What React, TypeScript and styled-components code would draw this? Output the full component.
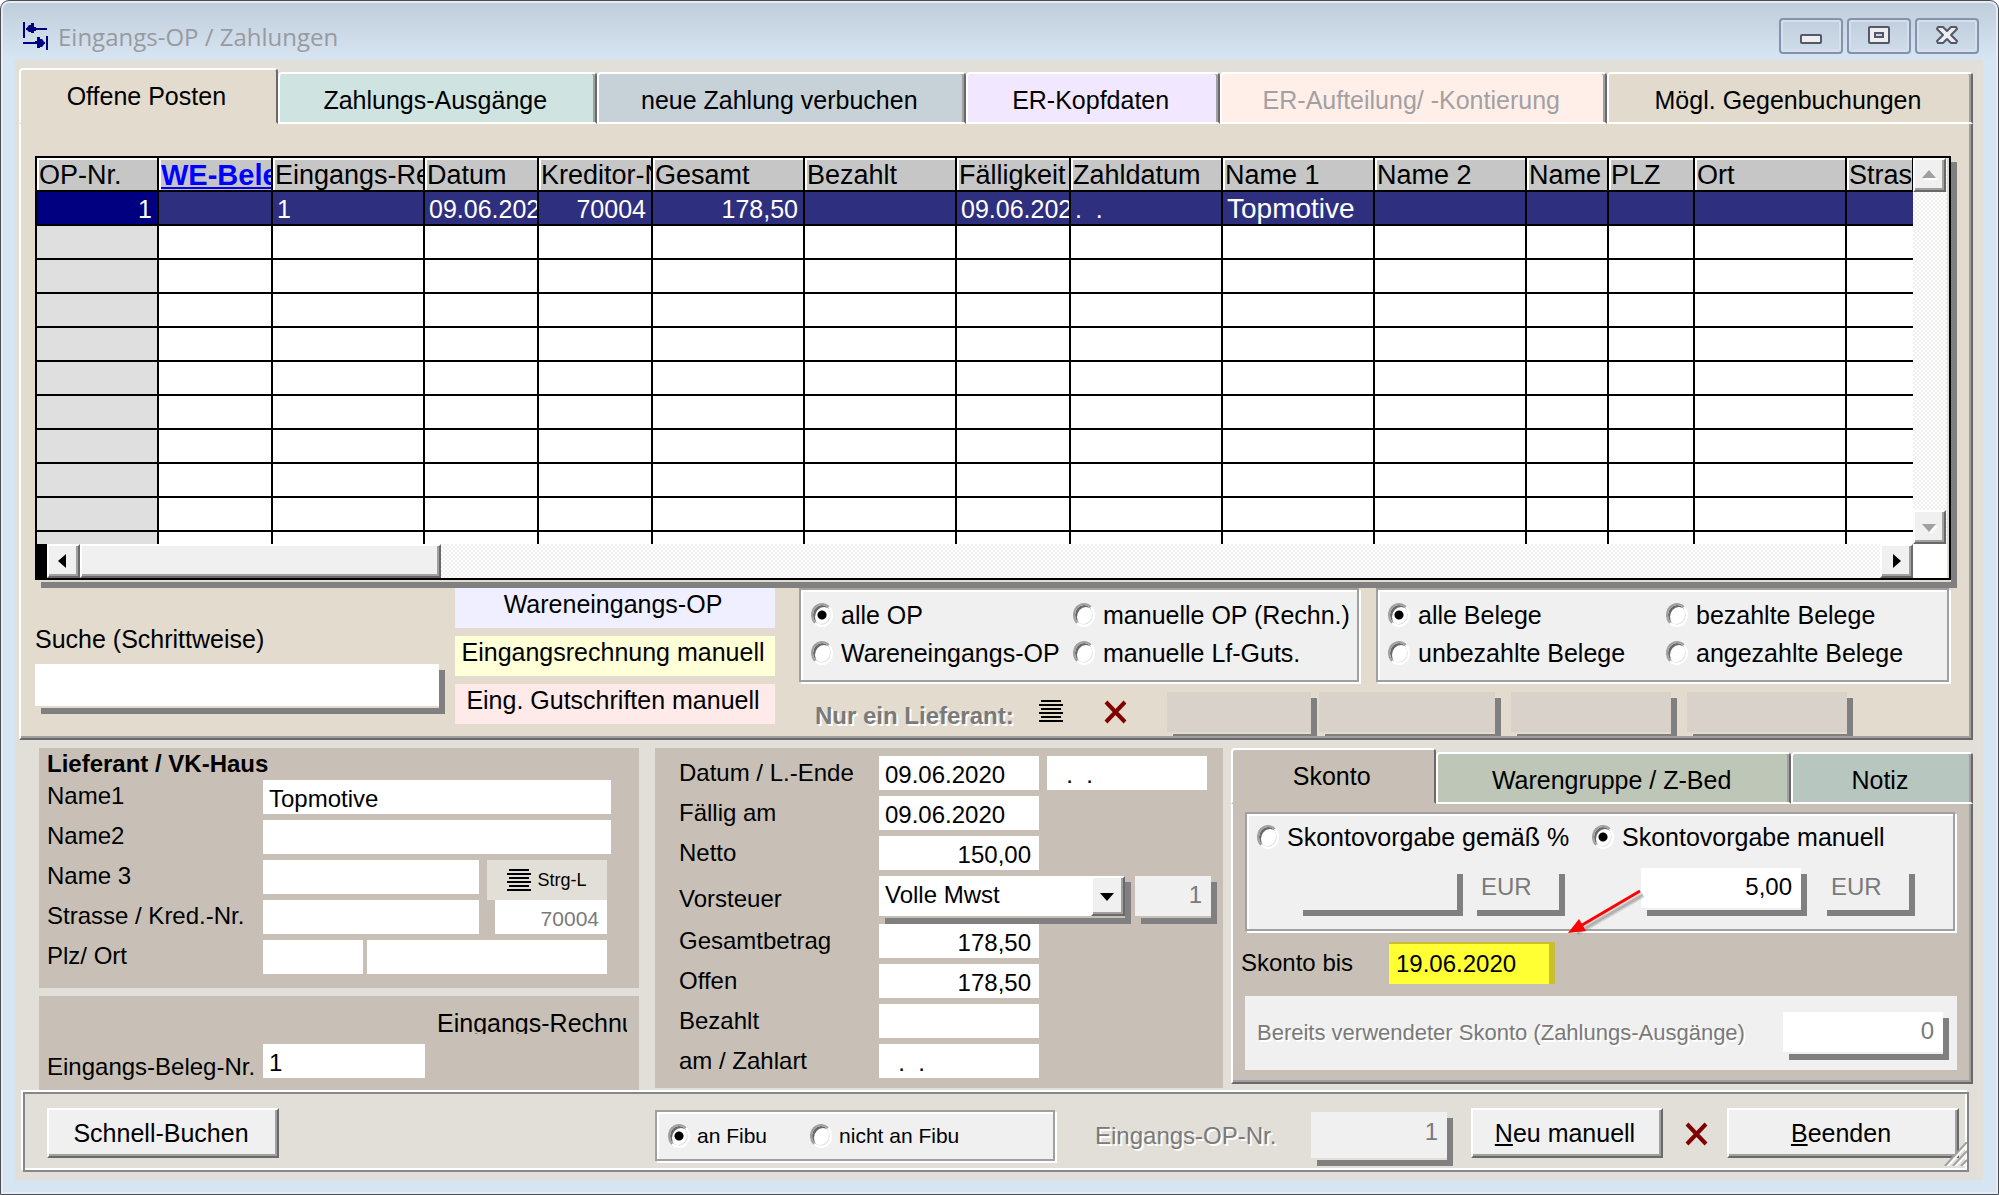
import React from "react";
import styled, { createGlobalStyle, css } from "styled-components";

const SANS = '"Liberation Sans", Arial, sans-serif';
const C = {
  face: "#e2dfd8",
  page: "#e3dbce",
  taupe: "#c8c0b6",
  control: "#f0f0f0",
  light: "#ffffff",
  mid: "#a0a0a0",
  dark: "#696969",
  shadow: "#808080",
  muted: "#7a7a7a",
};

const GlobalStyle = createGlobalStyle`
  *, *::before, *::after { box-sizing: border-box; }
  body { margin: 0; background: #fff; }
  button, input, select { font: inherit; color: inherit; margin: 0; border-radius: 0; }
`;

/* ---------- window ---------- */

const Window = styled.div`
  display: flex;
  flex-direction: column;
  min-height: 100vh;
  border: 1px solid #4b4f55;
  border-radius: 9px 9px 0 0;
  background: linear-gradient(#bfccda, #d7e4f2 58px);
  box-shadow: inset 0 0 0 2px #e6ecf4;
  padding: 0 15px 14px 14px;
  font: 24px/28px ${SANS};
  color: #000;
`;

const TitleBar = styled.header`
  display: flex;
  align-items: center;
  height: 59px;
  padding: 10px 4px 0 8px;
`;

const Title = styled.h1`
  flex: 1;
  margin: 2px 0 0 10px;
  font: 400 24px/32px "Open Sans", "Noto Sans", sans-serif;
  color: #999a9f;
`;

const CaptionButtons = styled.div`
  display: flex;
  gap: 4px;
  align-self: flex-start;
  padding-top: 7px;
`;

const CaptionButton = styled.button`
  display: grid;
  place-items: center;
  width: 64px;
  height: 36px;
  padding: 0;
  border: 2px solid #8492ad;
  border-radius: 4px;
  background: linear-gradient(#c1cedd, #cfdcea);
  box-shadow: inset 0 0 0 2px #d5e0ec;
`;

const Body = styled.main`
  flex: 1;
  background: ${C.face};
  padding: 8px 10px 8px 4px;
`;

/* ---------- tabs ---------- */

const TabStrip = styled.div`
  display: flex;
  align-items: flex-end;
`;

const Tab = styled.button<{ $basis: number; $bg: string; $active?: boolean }>`
  flex: ${(p) => p.$basis} 1 0;
  min-width: 0;
  height: 52px;
  padding: 4px 4px 0 0;
  border: 2px solid ${C.light};
  border-right-color: ${C.dark};
  border-radius: 4px 4px 0 0;
  background: ${(p) => p.$bg};
  box-shadow: inset -2px 0 0 ${C.mid};
  font-size: 25px;
  white-space: nowrap;
  &:disabled { color: #a3a0a3; }
  ${(p) =>
    p.$active &&
    css`
      height: 56px;
      padding: 0 4px 0 0;
      border-bottom-color: ${p.$bg};
      box-shadow: none;
    `}
`;

const TabPage = styled.section<{ $bg: string }>`
  background: ${(p) => p.$bg};
  border: solid ${C.dark};
  border-width: 0 2px 2px 0;
  border-left: 2px solid ${C.light};
  box-shadow: inset -2px -2px 0 ${C.mid};
`;

const MainPage = styled(TabPage)`
  padding: 32px 20px 2px 14px;
`;

/* ---------- data grid ---------- */

const Drop = styled.div<{ $bg: string }>`
  display: flex;
  flex: none;
  padding-bottom: 2px;
  background: ${(p) => p.$bg};
  box-shadow: 6px 6px 0 ${C.shadow};
`;

const GridFrame = styled.div`
  display: grid;
  grid-template-columns: minmax(0, 1fr) 34px;
  grid-template-rows: 386px 34px;
  width: 100%;
  padding-right: 2px;
  border: 2px solid #000;
  background: ${C.page};
`;

const GridView = styled.div`
  overflow: hidden;
  background: #fff;
`;

const Table = styled.table`
  width: 100%;
  table-layout: fixed;
  border-collapse: separate;
  border-spacing: 0;
`;

const HeadCell = styled.th<{ $key?: boolean }>`
  height: 34px;
  padding: 2px 0 0 2px;
  border-right: 2px solid #000;
  border-bottom: 2px solid #000;
  background: #c6c6c6;
  box-shadow: inset 2px 2px 0 #fff;
  overflow: hidden;
  white-space: nowrap;
  text-align: left;
  font-size: 27px;
  line-height: 30px;
  font-weight: 400;
  ${(p) =>
    p.$key &&
    css`
      font-size: 29px;
      font-weight: 700;
      color: #0000ff;
      text-decoration: underline;
    `}
  &:last-child { border-right-width: 1px; }
`;

const Cell = styled.td<{ $right?: boolean; $big?: boolean }>`
  height: 34px;
  padding: 1px 5px 0 4px;
  border-right: 2px solid #000;
  border-bottom: 2px solid #000;
  overflow: hidden;
  white-space: pre;
  font-size: ${(p) => (p.$big ? 28 : 25)}px;
  line-height: 30px;
  text-align: ${(p) => (p.$right ? "right" : "left")};
  &:first-child { background: #dfdfdf; }
  &:last-child { border-right: 0; }
`;

const Row = styled.tr<{ $selected?: boolean }>`
  ${(p) =>
    p.$selected &&
    css`
      background: #2f2f80;
      color: #fff;
      ${Cell}:first-child { background: #000080; }
    `}
`;

const track = css`
  background: repeating-conic-gradient(#fff 0 25%, #f0f0f0 0 50%) 0 0 / 4px 4px;
`;

const VScroll = styled.div`
  ${track}
  display: flex;
  flex-direction: column;
  justify-content: space-between;
`;

const HScroll = styled.div`
  ${track}
  display: flex;
  border-left: 10px solid #000;
`;

const raised = css`
  border: 2px solid ${C.light};
  border-right-color: ${C.dark};
  border-bottom-color: ${C.dark};
  background: ${C.control};
  box-shadow: inset -2px -2px 0 ${C.mid};
`;

const ScrollButton = styled.button`
  ${raised}
  display: grid;
  place-items: center;
  flex: none;
  width: 33px;
  height: 34px;
  padding: 0;
`;

const Thumb = styled.div`
  ${raised}
  width: 361px;
  margin-right: auto;
`;

/* ---------- filter strip ---------- */

const Filters = styled.div`
  display: flex;
  height: 148px;
  margin-top: 6px;
  overflow: hidden;
`;

const SearchBox = styled.div`
  width: 420px;
  padding-top: 37px;
`;

const SearchLabel = styled.label`
  display: block;
  margin-bottom: 11px;
  font-size: 25px;
`;

const SearchField = styled.div`
  width: 404px;
`;

const Legends = styled.div`
  display: flex;
  flex-direction: column;
  gap: 8px;
  width: 320px;
`;

const Legend = styled.div<{ $bg: string }>`
  height: 40px;
  padding: 2px 4px 0 0;
  background: ${(p) => p.$bg};
  font-size: 25px;
  text-align: center;
  white-space: nowrap;
`;

const FilterColumn = styled.div`
  flex: 1;
  margin-left: 24px;
  padding-right: 2px;
`;

const GroupRow = styled.div`
  display: flex;
  gap: 17px;
`;

const Groove = styled.div`
  border: 2px solid ${C.mid};
  background: ${C.control};
  box-shadow: 2px 2px 0 #fff, inset 2px 2px 0 #fff;
`;

const RadioGrid = styled(Groove)<{ $first: number; $width?: number }>`
  display: grid;
  grid-template-columns: ${(p) => p.$first}px 1fr;
  grid-auto-rows: 38px;
  flex: ${(p) => (p.$width ? `0 0 ${p.$width}px` : "1")};
  height: 94px;
  padding: 6px 0 0 10px;
`;

const RadioLabel = styled.label<{ $small?: boolean }>`
  display: flex;
  align-items: center;
  gap: ${(p) => (p.$small ? 7 : 8)}px;
  font-size: ${(p) => (p.$small ? 21 : 25)}px;
  white-space: nowrap;
`;

const RadioInput = styled.input`
  appearance: none;
  flex: none;
  width: 22px;
  height: 24px;
  border: 2px solid ${C.mid};
  border-right-color: #fff;
  border-bottom-color: #fff;
  background: #fff;
  box-shadow: inset 2px 2px 0 ${C.dark}, inset -1px -1px 0 #e3e3e3;
  && { border-radius: 50%; }
  &:checked {
    background: radial-gradient(circle at center, #000 4px, #fff 5px);
  }
`;

const SupplierRow = styled.div`
  display: flex;
  align-items: flex-start;
  margin-top: 10px;
  padding-left: 16px;
`;

const SupplierLabel = styled.span`
  width: 224px;
  margin-top: 10px;
  font-weight: 700;
  color: ${C.muted};
  text-shadow: 2px 2px 0 #fff;
`;

const IconButton = styled.button<{ $gap: number }>`
  display: block;
  flex: none;
  margin: 8px ${(p) => p.$gap}px 0 0;
  padding: 0;
  border: 0;
  background: none;
  line-height: 0;
`;

/* ---------- fields ---------- */

const TextField = styled.input<{ $w?: number; $right?: boolean; $small?: boolean; $dim?: boolean }>`
  display: block;
  flex: none;
  width: ${(p) => (p.$w ? `${p.$w}px` : "100%")};
  height: 34px;
  padding: 3px 8px 0 6px;
  border: 0;
  background: #fff;
  color: ${(p) => (p.$dim ? C.muted : "#000")};
  font-size: ${(p) => (p.$small ? 21 : 24)}px;
  text-align: ${(p) => (p.$right ? "right" : "left")};
`;

const TallField = styled(TextField)<{ $bg?: string; $h?: number }>`
  height: ${(p) => p.$h ?? 40}px;
  padding: 0 9px 3px 10px;
  background: ${(p) => p.$bg ?? "#fff"};
`;

const DueField = styled(TallField)`
  height: 42px;
  padding: 0 2px 0 7px;
  border: solid #c8c030;
  border-width: 2px 6px 0 0;
  background: #ffff33;
`;

/* ---------- lower panels ---------- */

const Lower = styled.div`
  display: flex;
  align-items: flex-start;
  margin-top: 8px;
  padding-left: 20px;
`;

const LeftColumn = styled.div`
  display: flex;
  flex: 0 0 600px;
  flex-direction: column;
  gap: 8px;
  margin-right: 16px;
`;

const Panel = styled.section`
  background: ${C.taupe};
`;

const AddressPanel = styled(Panel)`
  padding: 2px 0 14px 8px;
`;

const PanelTitle = styled.h2`
  margin: 0 0 2px;
  font: 700 24px/28px ${SANS};
`;

const Rows = styled.div`
  display: flex;
  flex-direction: column;
  gap: 6px;
`;

const FieldRow = styled.div<{ $center?: boolean }>`
  display: flex;
  align-items: ${(p) => (p.$center ? "center" : "flex-start")};
  min-height: 34px;
`;

const FieldLabel = styled.label<{ $w: number }>`
  flex: none;
  width: ${(p) => p.$w}px;
  line-height: 32px;
  white-space: nowrap;
`;

const Space = styled.span<{ $w: number }>`
  flex: none;
  width: ${(p) => p.$w}px;
`;

const LookupButton = styled.button`
  display: flex;
  align-items: center;
  justify-content: center;
  gap: 6px;
  width: 120px;
  height: 40px;
  margin: 0 0 -6px 8px;
  padding: 0;
  border: 0;
  background: ${C.face};
  font-size: 18px;
`;

const DocPanel = styled(Panel)`
  padding: 13px 12px 12px 8px;
`;

const ClippedCaption = styled.div`
  width: 190px;
  height: 25px;
  margin: 0 0 10px auto;
  overflow: hidden;
  font-size: 25px;
  white-space: nowrap;
`;

const DocRow = styled.div`
  display: flex;
  align-items: flex-start;
`;

const DocLabel = styled.label`
  width: 216px;
  height: 34px;
  padding-top: 9px;
  white-space: nowrap;
`;

const AmountPanel = styled(Panel)`
  flex: 0 0 568px;
  margin-right: 8px;
  padding: 8px 0 10px 24px;
`;

const VatRow = styled(FieldRow)`
  height: 42px;
`;

const VatLabel = styled(FieldLabel)`
  padding-top: 7px;
`;

const Combo = styled.div`
  position: relative;
  width: 246px;
  height: 40px;
  background: #fff;
`;

const Select = styled.select`
  appearance: none;
  width: 100%;
  height: 40px;
  padding: 0 40px 2px 6px;
  border: 0;
  background: #fff;
`;

const ComboArrow = styled.span`
  ${raised}
  position: absolute;
  top: 0;
  right: 0;
  display: grid;
  place-items: center;
  width: 34px;
  height: 40px;
  pointer-events: none;
`;

const DiscountColumn = styled.div`
  flex: 1;
  min-width: 0;
`;

const DiscountPage = styled(TabPage)`
  padding: 8px 14px 12px 12px;
`;

const DiscountGroup = styled(Groove)`
  position: relative;
  height: 119px;
  margin-right: 2px;
  padding: 8px 0 0 10px;
`;

const DiscountRadios = styled.div`
  display: grid;
  grid-template-columns: 335px 1fr;
  height: 30px;
`;

const DiscountFields = styled.div`
  display: flex;
  align-items: flex-start;
  margin-top: 16px;
  padding-left: 40px;
`;

const Arrow = styled.svg`
  position: absolute;
  left: 314px;
  top: 70px;
  overflow: visible;
  pointer-events: none;
`;

const DueRow = styled.div`
  display: flex;
  align-items: center;
  margin: 11px 0 12px -4px;
`;

const DueLabel = styled.label`
  width: 148px;
`;

const UsedBox = styled.div`
  display: flex;
  align-items: center;
  justify-content: space-between;
  height: 74px;
  padding: 0 14px 0 12px;
  background: ${C.control};
  font-size: 22px;
`;

const DimLabel = styled.label`
  color: ${C.muted};
  text-shadow: 2px 2px 0 #fff;
  white-space: nowrap;
`;

/* ---------- footer ---------- */

const Footer = styled.footer`
  position: relative;
  display: flex;
  align-items: flex-start;
  height: 80px;
  margin: 2px 4px 0;
  padding: 14px 8px 0 22px;
  border: 2px solid #85878a;
  box-shadow: -2px -2px 0 #fff, inset -2px -2px 0 #fff;
`;

const PushButton = styled.button<{ $w: number }>`
  ${raised}
  width: ${(p) => p.$w}px;
  height: 50px;
  padding: 0 4px 0 0;
  font-size: 25px;
`;

const PostingGroup = styled(Groove)`
  display: flex;
  align-items: center;
  gap: 43px;
  width: 400px;
  height: 51px;
  margin: 2px 40px 0 376px;
  padding-left: 11px;
`;

const FooterLabel = styled(DimLabel)`
  width: 216px;
  padding-top: 14px;
`;

const FooterRight = styled.div`
  display: flex;
  align-items: flex-start;
  margin-left: auto;
`;

const FooterDrop = styled(Drop)`
  margin-top: 4px;
`;

const FooterField = styled(TallField)`
  padding-bottom: 7px;
`;

const FooterIcon = styled(IconButton)`
  margin-top: 14px;
`;

const Grip = styled.svg`
  position: absolute;
  right: 0;
  bottom: 4px;
`;

/* ---------- drawings ---------- */

const AppIcon = () => (
  <svg width="25" height="28" viewBox="0 0 25 28" fill="none" stroke="#000080" strokeWidth="2" aria-hidden="true">
    <path d="M1 0v16M24 14v14M3 7h21M0 21h22" />
    <path d="M3 7l3-4h2V1h3v4h2v4h-2v2H8v-1H6zM22 21l-3-4h-2v-2h-3v4h-2v3h2v4h3v-1h2z" fill="#000080" stroke="none" />
  </svg>
);

const ListIcon = () => (
  <svg width="24" height="23" viewBox="0 0 24 23" stroke="#000" strokeWidth="2" aria-hidden="true">
    <path d="M2 1h20M0 5h24M2 9h20M0 13h24M2 17h20M0 21h24" />
  </svg>
);

const CrossIcon = () => (
  <svg width="24" height="24" viewBox="0 0 24 24" stroke="#800000" strokeWidth="4" fill="none" aria-hidden="true">
    <path d="M2 2l19 20M21 2L2 22" />
  </svg>
);

const Tri = ({ d, dim }: { d: string; dim?: boolean }) => (
  <svg width="18" height="18" viewBox="0 0 18 18" aria-hidden="true">
    {dim && <path d={d} fill="#fff" transform="translate(2 2)" />}
    <path d={d} fill={dim ? "#a0a0a0" : "#000"} />
  </svg>
);

const UP = "M8 4l7 8H1z";
const DOWN = "M1 6h14l-7 8z";
const LEFT = "M11 2v14L3 9z";
const RIGHT = "M5 2v14l8-7z";

/* ---------- data ---------- */

const columns: [string, number | undefined][] = [
  ["OP-Nr.", 122], ["WE-Beleg", 114], ["Eingangs-Rechnung", 152], ["Datum", 114],
  ["Kreditor-Nr.", 114], ["Gesamt", 152], ["Bezahlt", 152], ["Fälligkeit", 114],
  ["Zahldatum", 152], ["Name 1", 152], ["Name 2", 152], ["Name 3", 82],
  ["PLZ", 86], ["Ort", 152], ["Stras", undefined],
];
const record = ["1", "", "1", "09.06.2020", "70004", "178,50", "", "09.06.2020", ".  .", "Topmotive", "", "", "", "", ""];
const rightAligned = new Set([0, 4, 5]);

const tabs = [
  { label: "Offene Posten", w: 257, bg: C.page },
  { label: "Zahlungs-Ausgänge", w: 319, bg: "#cfe3e1" },
  { label: "neue Zahlung verbuchen", w: 370, bg: "#c6d1d8" },
  { label: "ER-Kopfdaten", w: 252, bg: "#f1e8ff" },
  { label: "ER-Aufteilung/ -Kontierung", w: 389, bg: "#ffefe8", disabled: true },
  { label: "Mögl. Gegenbuchungen", w: 367, bg: "#e2dbcd" },
];

const discountTabs = [
  { label: "Skonto", w: 204, bg: C.taupe },
  { label: "Warengruppe / Z-Bed", w: 358, bg: "#bec6b7" },
  { label: "Notiz", w: 180, bg: "#b7c7c0" },
];

const amounts = [
  { id: "gesamt", label: "Gesamtbetrag", value: "178,50", right: true },
  { id: "offen", label: "Offen", value: "178,50", right: true },
  { id: "bezahlt", label: "Bezahlt", value: "", right: true },
  { id: "zahlart", label: "am / Zahlart", value: "  .  .", right: false },
];

const Radio = ({ name, label, on, small }: { name: string; label: string; on?: boolean; small?: boolean }) => (
  <RadioLabel $small={small}>
    <RadioInput type="radio" name={name} defaultChecked={on} />
    {label}
  </RadioLabel>
);

const Tabs = ({ items, name }: { items: { label: string; w: number; bg: string; disabled?: boolean }[]; name: string }) => (
  <TabStrip role="tablist" aria-label={name}>
    {items.map((t, i) => (
      <Tab key={t.label} role="tab" type="button" aria-selected={i === 0} $basis={t.w} $bg={t.bg} $active={i === 0} disabled={t.disabled}>
        {t.label}
      </Tab>
    ))}
  </TabStrip>
);

const DataGrid = () => (
  <Drop $bg={C.page}>
    <GridFrame>
      <GridView>
        <Table>
          <colgroup>
            {columns.map(([c, w]) => <col key={c} style={{ width: w }} />)}
          </colgroup>
          <thead>
            <tr>
              {columns.map(([c], i) => <HeadCell key={c} $key={i === 1}>{c}</HeadCell>)}
            </tr>
          </thead>
          <tbody>
            <Row $selected>
              {record.map((v, i) => (
                <Cell key={i} $right={rightAligned.has(i)} $big={i === 9}>{v}</Cell>
              ))}
            </Row>
            {Array.from({ length: 10 }, (_, r) => (
              <Row key={r}>
                {columns.map(([c]) => <Cell key={c} />)}
              </Row>
            ))}
          </tbody>
        </Table>
      </GridView>
      <VScroll>
        <ScrollButton type="button" aria-label="Nach oben"><Tri d={UP} dim /></ScrollButton>
        <ScrollButton type="button" aria-label="Nach unten"><Tri d={DOWN} dim /></ScrollButton>
      </VScroll>
      <HScroll>
        <ScrollButton type="button" aria-label="Nach links"><Tri d={LEFT} /></ScrollButton>
        <Thumb />
        <ScrollButton type="button" aria-label="Nach rechts"><Tri d={RIGHT} /></ScrollButton>
      </HScroll>
      <GridView />
    </GridFrame>
  </Drop>
);

const FilterStrip = () => (
  <Filters>
    <SearchBox>
      <SearchLabel htmlFor="suche">Suche (Schrittweise)</SearchLabel>
      <SearchField>
        <Drop $bg={C.page}><TallField id="suche" $h={42} /></Drop>
      </SearchField>
    </SearchBox>
    <Legends>
      <Legend $bg="#efefff">Wareneingangs-OP</Legend>
      <Legend $bg="#ffffd8">Eingangsrechnung manuell</Legend>
      <Legend $bg="#ffeaea">Eing. Gutschriften manuell</Legend>
    </Legends>
    <FilterColumn>
      <GroupRow>
        <RadioGrid role="radiogroup" aria-label="OP-Art" $first={262} $width={560}>
          <Radio name="op" label="alle OP" on />
          <Radio name="op" label="manuelle OP (Rechn.)" />
          <Radio name="op" label="Wareneingangs-OP" />
          <Radio name="op" label="manuelle Lf-Guts." />
        </RadioGrid>
        <RadioGrid role="radiogroup" aria-label="Belege" $first={278}>
          <Radio name="beleg" label="alle Belege" on />
          <Radio name="beleg" label="bezahlte Belege" />
          <Radio name="beleg" label="unbezahlte Belege" />
          <Radio name="beleg" label="angezahlte Belege" />
        </RadioGrid>
      </GroupRow>
      <SupplierRow>
        <SupplierLabel>Nur ein Lieferant:</SupplierLabel>
        <IconButton type="button" aria-label="Lieferant wählen" $gap={41}><ListIcon /></IconButton>
        <IconButton type="button" aria-label="Lieferant löschen" $gap={39}><CrossIcon /></IconButton>
        <Drop $bg={C.page}><TallField $w={144} $bg="#d8d2ca" disabled aria-label="Lieferant Nr." /></Drop>
        <Space $w={8} />
        <Drop $bg={C.page}><TallField $w={176} $bg="#d8d2ca" disabled aria-label="Lieferant Name" /></Drop>
        <Space $w={16} />
        <Drop $bg={C.page}><TallField $w={160} $bg="#d8d2ca" disabled aria-label="Lieferant Strasse" /></Drop>
        <Space $w={16} />
        <Drop $bg={C.page}><TallField $w={160} $bg="#d8d2ca" disabled aria-label="Lieferant Ort" /></Drop>
      </SupplierRow>
    </FilterColumn>
  </Filters>
);

const Address = () => (
  <AddressPanel>
    <PanelTitle>Lieferant / VK-Haus</PanelTitle>
    <Rows>
      <FieldRow>
        <FieldLabel $w={216} htmlFor="name1">Name1</FieldLabel>
        <TextField id="name1" $w={348} defaultValue="Topmotive" />
      </FieldRow>
      <FieldRow>
        <FieldLabel $w={216} htmlFor="name2">Name2</FieldLabel>
        <TextField id="name2" $w={348} />
      </FieldRow>
      <FieldRow>
        <FieldLabel $w={216} htmlFor="name3">Name 3</FieldLabel>
        <TextField id="name3" $w={216} />
        <LookupButton type="button"><ListIcon />Strg-L</LookupButton>
      </FieldRow>
      <FieldRow>
        <FieldLabel $w={216} htmlFor="strasse">Strasse / Kred.-Nr.</FieldLabel>
        <TextField id="strasse" $w={216} />
        <Space $w={16} />
        <TextField $w={112} $right $small $dim disabled aria-label="Kreditor-Nr." defaultValue="70004" />
      </FieldRow>
      <FieldRow>
        <FieldLabel $w={216} htmlFor="plz">Plz/ Ort</FieldLabel>
        <TextField id="plz" $w={100} />
        <Space $w={4} />
        <TextField $w={240} aria-label="Ort" />
      </FieldRow>
    </Rows>
  </AddressPanel>
);

const Amounts = () => (
  <AmountPanel>
    <Rows>
      <FieldRow $center>
        <FieldLabel $w={200} htmlFor="datum">Datum / L.-Ende</FieldLabel>
        <TextField id="datum" $w={160} defaultValue="09.06.2020" />
        <Space $w={8} />
        <TextField $w={160} aria-label="Leistungsende" defaultValue="  .  ." />
      </FieldRow>
      <FieldRow $center>
        <FieldLabel $w={200} htmlFor="faellig">Fällig am</FieldLabel>
        <TextField id="faellig" $w={160} defaultValue="09.06.2020" />
      </FieldRow>
      <FieldRow $center>
        <FieldLabel $w={200} htmlFor="netto">Netto</FieldLabel>
        <TextField id="netto" $w={160} $right defaultValue="150,00" />
      </FieldRow>
      <VatRow>
        <VatLabel $w={200} htmlFor="vorsteuer">Vorsteuer</VatLabel>
        <Drop $bg={C.taupe}>
          <Combo>
            <Select id="vorsteuer" defaultValue="Volle Mwst"><option>Volle Mwst</option></Select>
            <ComboArrow><Tri d={DOWN} /></ComboArrow>
          </Combo>
        </Drop>
        <Space $w={10} />
        <Drop $bg={C.taupe}><TallField $w={76} $bg={C.control} $dim $right disabled aria-label="Steuerschlüssel" defaultValue="1" /></Drop>
      </VatRow>
      {amounts.map((a) => (
        <FieldRow $center key={a.id}>
          <FieldLabel $w={200} htmlFor={a.id}>{a.label}</FieldLabel>
          <TextField id={a.id} $w={160} $right={a.right} defaultValue={a.value} />
        </FieldRow>
      ))}
    </Rows>
  </AmountPanel>
);

const Discount = () => (
  <DiscountColumn>
    <Tabs items={discountTabs} name="Konditionen" />
    <DiscountPage $bg={C.taupe}>
      <DiscountGroup role="radiogroup" aria-label="Skontovorgabe">
        <DiscountRadios>
          <Radio name="skonto" label="Skontovorgabe gemäß %" />
          <Radio name="skonto" label="Skontovorgabe manuell" on />
        </DiscountRadios>
        <DiscountFields>
          <Drop $bg={C.control}><TallField $w={160} $bg={C.control} disabled aria-label="Skonto nach Prozent" /></Drop>
          <Space $w={14} />
          <Drop $bg={C.control}><TallField $w={88} $bg={C.control} $dim disabled aria-label="Währung Prozent" defaultValue="EUR" /></Drop>
          <Space $w={82} />
          <Drop $bg={C.control}><TallField $w={160} $right aria-label="Skonto manuell" defaultValue="5,00" /></Drop>
          <Space $w={20} />
          <Drop $bg={C.control}><TallField $w={88} $bg={C.control} $dim disabled aria-label="Währung manuell" defaultValue="EUR" /></Drop>
        </DiscountFields>
        <Arrow width="82" height="50" viewBox="0 0 82 50" aria-hidden="true">
          <path d="M82 11L16 49" stroke="#707070" strokeOpacity="0.2" strokeWidth="6" />
          <path d="M82 11L16 49" stroke="#707070" strokeOpacity="0.35" strokeWidth="3" />
          <path d="M79 7L16 44" stroke="#f00" strokeWidth="3" />
          <path d="M7 49l11-14 7 12z" fill="#f00" />
        </Arrow>
      </DiscountGroup>
      <DueRow>
        <DueLabel htmlFor="skontobis">Skonto bis</DueLabel>
        <DueField id="skontobis" $w={166} defaultValue="19.06.2020" />
      </DueRow>
      <UsedBox>
        <DimLabel htmlFor="verwendet">Bereits verwendeter Skonto (Zahlungs-Ausgänge)</DimLabel>
        <Drop $bg={C.control}><TallField id="verwendet" $w={160} $right $dim disabled defaultValue="0" /></Drop>
      </UsedBox>
    </DiscountPage>
  </DiscountColumn>
);

export default function App() {
  return (
    <>
      <GlobalStyle />
      <Window>
        <TitleBar>
          <AppIcon />
          <Title>Eingangs-OP / Zahlungen</Title>
          <CaptionButtons>
            <CaptionButton type="button" aria-label="Minimieren">
              <svg width="24" height="20" viewBox="0 0 24 20"><rect x="2" y="9" width="20" height="8" rx="1" fill="#eee" stroke="#53576a" strokeWidth="2" /></svg>
            </CaptionButton>
            <CaptionButton type="button" aria-label="Maximieren">
              <svg width="24" height="20" viewBox="0 0 24 20"><rect x="2" y="1" width="20" height="16" rx="1" fill="#eee" stroke="#53576a" strokeWidth="2" /><rect x="8" y="7" width="8" height="4" fill="#c8d4e2" stroke="#53576a" strokeWidth="2" /></svg>
            </CaptionButton>
            <CaptionButton type="button" aria-label="Schließen">
              <svg width="24" height="20" viewBox="0 0 24 20"><path d="M3 1h5l4 4 4-4h5l1 2-6 6 6 6-1 2h-5l-4-4-4 4H3l-1-2 6-6-6-6z" fill="#eee" stroke="#53576a" strokeWidth="2" strokeLinejoin="round" /></svg>
            </CaptionButton>
          </CaptionButtons>
        </TitleBar>
        <Body>
          <Tabs items={tabs} name="Bereiche" />
          <MainPage $bg={C.page}>
            <DataGrid />
            <FilterStrip />
          </MainPage>
          <Lower>
            <LeftColumn>
              <Address />
              <DocPanel>
                <ClippedCaption>Eingangs-Rechnung</ClippedCaption>
                <DocRow>
                  <DocLabel htmlFor="beleg-nr">Eingangs-Beleg-Nr.</DocLabel>
                  <TextField id="beleg-nr" $w={162} defaultValue="1" />
                </DocRow>
              </DocPanel>
            </LeftColumn>
            <Amounts />
            <Discount />
          </Lower>
          <Footer>
            <PushButton type="button" $w={232}>Schnell-Buchen</PushButton>
            <PostingGroup role="radiogroup" aria-label="Fibu">
              <Radio name="fibu" label="an Fibu" on small />
              <Radio name="fibu" label="nicht an Fibu" small />
            </PostingGroup>
            <FooterRight>
              <FooterLabel htmlFor="op-nr">Eingangs-OP-Nr.</FooterLabel>
              <FooterDrop $bg={C.face}><FooterField id="op-nr" $w={136} $h={46} $bg={C.control} $dim $right disabled defaultValue="1" /></FooterDrop>
              <Space $w={24} />
              <PushButton type="button" $w={192}><u>N</u>eu manuell</PushButton>
              <Space $w={22} />
              <FooterIcon type="button" aria-label="Löschen" $gap={18}><CrossIcon /></FooterIcon>
              <PushButton type="button" $w={232}><u>B</u>eenden</PushButton>
            </FooterRight>
            <Grip width="24" height="24" viewBox="0 0 24 24" aria-hidden="true">
              <path d="M4 24L24 2M12 24L24 11M20 24l4-4" stroke="#fff" strokeWidth="3" />
              <path d="M2 24L24 0M10 24L24 9M18 24l6-6" stroke="#a0a0a0" strokeWidth="2" />
            </Grip>
          </Footer>
        </Body>
      </Window>
    </>
  );
}
